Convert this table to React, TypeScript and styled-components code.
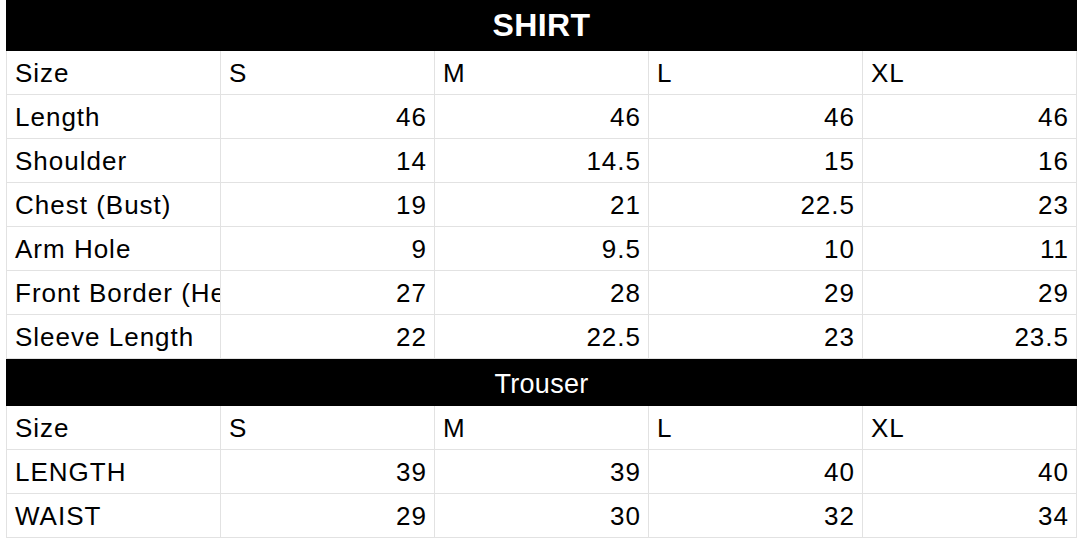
import styled, { createGlobalStyle } from "styled-components";

const GlobalStyle = createGlobalStyle`
  html, body {
    margin: 0;
    padding: 0;
    background: #ffffff;
  }
`;

const Sheet = styled.div`
  margin-left: 6px;
  width: 1071px;
  font-family: "Liberation Sans", Arial, sans-serif;
  color: #000000;
`;

const TitleBar = styled.div<{ $main?: boolean }>`
  box-sizing: border-box;
  height: ${(p) => (p.$main ? "51px" : "47px")};
  padding-top: ${(p) => (p.$main ? "0" : "3px")};
  background: #000000;
  color: #ffffff;
  display: flex;
  align-items: center;
  justify-content: center;
  font-size: ${(p) => (p.$main ? "32px" : "27px")};
  font-weight: ${(p) => (p.$main ? 700 : 400)};
  letter-spacing: ${(p) => (p.$main ? "0.4px" : "0.3px")};
`;

const Row = styled.div`
  display: grid;
  grid-template-columns: 215px repeat(4, 214px);
  height: 44px;
`;

const Cell = styled.div<{ $num?: boolean }>`
  box-sizing: border-box;
  height: 44px;
  border-right: 1px solid #e2e2e2;
  border-bottom: 1px solid #e2e2e2;
  padding: 1px 7px 0 8px;
  display: flex;
  align-items: center;
  justify-content: ${(p) => (p.$num ? "flex-end" : "flex-start")};
  font-size: 26px;
  letter-spacing: 1px;
  white-space: nowrap;
  overflow: hidden;

  &:first-child {
    border-left: 1px solid #e2e2e2;
  }
`;

type Section = {
  title: string;
  main?: boolean;
  rows: [string, ...(string | number)[]][];
};

const sizes = ["S", "M", "L", "XL"];

const sections: Section[] = [
  {
    title: "SHIRT",
    main: true,
    rows: [
      ["Length", 46, 46, 46, 46],
      ["Shoulder", 14, 14.5, 15, 16],
      ["Chest (Bust)", 19, 21, 22.5, 23],
      ["Arm Hole", 9, 9.5, 10, 11],
      ["Front Border (Height)", 27, 28, 29, 29],
      ["Sleeve Length", 22, 22.5, 23, 23.5],
    ],
  },
  {
    title: "Trouser",
    rows: [
      ["LENGTH", 39, 39, 40, 40],
      ["WAIST", 29, 30, 32, 34],
    ],
  },
];

function SizeSection({ section }: { section: Section }) {
  return (
    <>
      <TitleBar $main={section.main}>{section.title}</TitleBar>
      <Row>
        <Cell>Size</Cell>
        {sizes.map((s) => (
          <Cell key={s}>{s}</Cell>
        ))}
      </Row>
      {section.rows.map(([label, ...values]) => (
        <Row key={label}>
          <Cell>{label}</Cell>
          {values.map((v, i) => (
            <Cell key={i} $num>
              {v}
            </Cell>
          ))}
        </Row>
      ))}
    </>
  );
}

function App() {
  return (
    <>
      <GlobalStyle />
      <Sheet>
        {sections.map((s) => (
          <SizeSection key={s.title} section={s} />
        ))}
      </Sheet>
    </>
  );
}

export default App;
